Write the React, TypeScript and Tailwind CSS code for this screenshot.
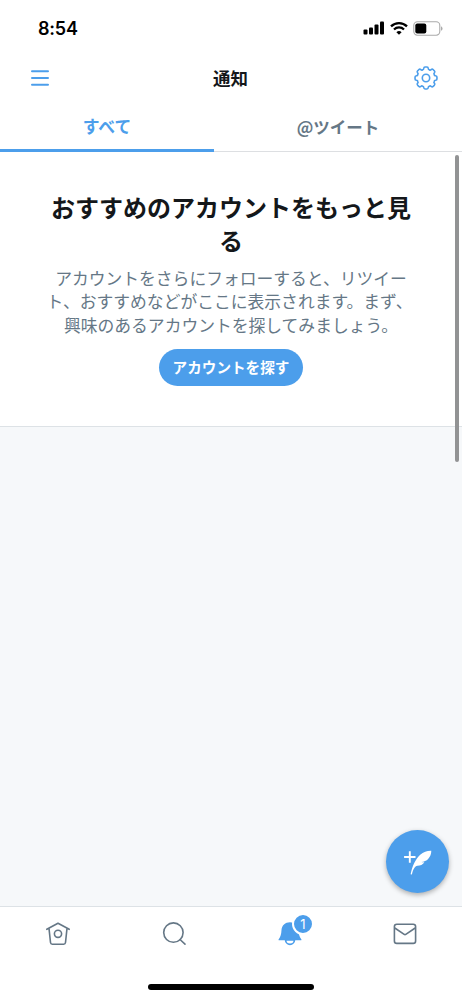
import type { ReactNode } from 'react'

interface TabProps {
  label: string
  active?: boolean
}

// one tooth of the gear, repeated every 45 degrees
function gearPath() {
  const point = (deg: number, r: number) => {
    const a = (deg * Math.PI) / 180
    return `${(12 + r * Math.sin(a)).toFixed(2)} ${(12 - r * Math.cos(a)).toFixed(2)}`
  }
  let d = `M${point(-22.5, 8.9)}`
  for (let t = 0; t < 360; t += 45) {
    d += `Q${point(t - 15.5, 8.6)} ${point(t - 13.5, 9.8)}`
    d += `Q${point(t - 11, 11.2)} ${point(t - 5, 11)}`
    d += `Q${point(t, 10.9)} ${point(t + 5, 11)}`
    d += `Q${point(t + 11, 11.2)} ${point(t + 13.5, 9.8)}`
    d += `Q${point(t + 15.5, 8.6)} ${point(t + 22.5, 8.9)}`
  }
  return d + 'Z'
}

function StatusBar() {
  return (
    <div className="flex h-[52px] items-center justify-between pl-[38px] pr-[19px] pt-1">
      <span className="pt-px font-[Inter] text-[18px] font-semibold leading-none tracking-[-0.2px] text-black">8:54</span>
      <div className="flex items-center gap-[5px]">
        <svg width="22" height="14" viewBox="0 0 22 14">
          <rect x="0.5" y="8.5" width="4" height="5" rx="1" />
          <rect x="6" y="6.5" width="4" height="7" rx="1" />
          <rect x="11.5" y="3.5" width="4" height="10" rx="1" />
          <rect x="17" y="0.5" width="4" height="13" rx="1" />
        </svg>
        <svg width="18" height="14" viewBox="0 0 18 14" fill="none" stroke="black" strokeWidth="2.3">
          <path d="M1 5.3a11.5 11.5 0 0 1 16 0" />
          <path d="M4 8.5a7.1 7.1 0 0 1 10 0" />
          <path d="M6.4 11.2a3.8 3.8 0 0 1 5.2 0L9 13.7z" fill="black" stroke="none" />
        </svg>
        <svg width="30" height="15" viewBox="0 0 30 15" fill="none">
          <rect x="0.8" y="0.8" width="26" height="13.4" rx="3.6" stroke="#aaa" strokeWidth="1.1" />
          <rect x="2.3" y="2.4" width="11" height="10.2" rx="2" fill="black" />
          <path d="M28.2 5.2c1.7.8 1.7 3.8 0 4.6z" fill="#999" />
        </svg>
      </div>
    </div>
  )
}

function Header() {
  return (
    <header className="flex h-[52px] items-center justify-between pl-[31px] pr-6">
      <svg width="18" height="18" viewBox="0 0 18 18" stroke="#4c9eeb" strokeWidth="2" strokeLinecap="round">
        <path d="M1 2.3h16M1 9h16M1 15.7h16" />
      </svg>
      <h1 className="-ml-[2px] text-[17.5px] font-bold leading-none text-[#14171a]">通知</h1>
      <svg width="24" height="24" viewBox="0 0 24 24" fill="none" stroke="#4c9eeb" strokeWidth="1.6">
        <path d={gearPath()} />
        <circle cx="12" cy="12" r="3.7" />
      </svg>
    </header>
  )
}

function Tab({ label, active }: TabProps) {
  return active ? (
    <div className="flex w-[214px] items-center justify-center border-b-[3px] border-[#4c9eeb] text-[16.8px] font-bold text-[#4c9eeb]">
      {label}
    </div>
  ) : (
    <div className="flex flex-1 items-center justify-center border-b border-[#dddfe2] pb-px text-[16.5px] font-bold text-[#657786]">
      {label}
    </div>
  )
}

function NavItem({ children }: { children: ReactNode }) {
  return <div className="flex flex-1 justify-center pt-[14px] text-[#657786]">{children}</div>
}

function BottomNav() {
  return (
    <nav className="flex h-[93px] shrink-0 flex-col border-t border-[#dde2e6] bg-white">
      <div className="-mr-px flex h-[77px]">
        <NavItem>
          <svg width="26" height="26" viewBox="0 0 26 26" fill="none" stroke="currentColor" strokeWidth="1.6" strokeLinecap="round" strokeLinejoin="round">
            <path d="M1.8 8.3 13 2.2l11.2 6.1M4 7.3l1.5 14.2q.2 1.7 1.8 1.7h11.4q1.6 0 1.8-1.7L22 7.3" />
            <circle cx="13" cy="12.8" r="3.6" />
          </svg>
        </NavItem>
        <NavItem>
          <svg width="26" height="26" viewBox="0 0 26 26" fill="none" stroke="currentColor" strokeWidth="1.6" strokeLinecap="round">
            <circle cx="12.4" cy="11.6" r="9.7" />
            <path d="m19 18.5 5 4.6" />
          </svg>
        </NavItem>
        <NavItem>
          <div className="relative ml-px">
            <svg width="26" height="26" viewBox="0 0 26 26">
              <path
                d="M13 1.3c-4.8 0-8.3 3.3-8.5 7.8-.2 4.3-1 7-2.6 8.8-.7.9-.5 1.4.4 1.4h21.400c.9 0 1.100-.5.4-1.400-1.600-1.800-2.400-4.500-2.600-8.800-.2-4.500-3.700-7.800-8.500-7.800z"
                fill="#4c9eeb"
              />
              <path d="M8.6 18.900a4.400 4.400 0 0 0 8.800 0z" fill="white" stroke="#4c9eeb" strokeWidth="1.700" />
            </svg>
            <span className="absolute left-[15px] top-[-8px] flex h-[22px] w-[22px] items-center justify-center rounded-full border-2 border-white bg-[#4c9eeb] font-[Inter] text-[13px] leading-none text-white">
              1
            </span>
          </div>
        </NavItem>
        <NavItem>
          <svg width="26" height="26" viewBox="0 0 26 26" fill="none" stroke="currentColor" strokeWidth="1.6" strokeLinejoin="round">
            <rect x="2.4" y="3.2" width="21.2" height="19.2" rx="2.4" />
            <path d="m2.8 7 9.4 6.3q.8.6 1.6 0L23.2 7" />
          </svg>
        </NavItem>
      </div>
      <div className="mx-auto h-[6px] w-[166px] rounded-full bg-black" />
    </nav>
  )
}

export default function App() {
  return (
    <div className="flex h-[999px] w-[462px] flex-col overflow-hidden bg-white font-['Noto_Sans_CJK_JP',sans-serif]">
      <StatusBar />
      <Header />
      <div className="flex h-[48px]">
        <Tab label="すべて" active />
        <Tab label="@ツイート" />
      </div>

      <main className="relative flex-1 bg-[#f6f8fa]">
        <section className="flex h-[275px] flex-col items-center border-b border-[#dde2e6] bg-white pt-[38px] text-center">
          <h2 className="text-[24px] font-bold leading-[33px] text-[#14171a]">
            おすすめのアカウントをもっと見
            <br />る
          </h2>
          <p className="mt-[11px] text-[16.8px] leading-[23.4px] text-[#657786]">
            アカウントをさらにフォローすると、リツイー
            <br />
            <span className="mr-[3px]">ト、おすすめなどがここに表示されます。まず、</span>
            <br />
            興味のあるアカウントを探してみましょう。
          </p>
          <button className="mt-[12px] h-[37px] w-[144px] rounded-full bg-[#4c9eeb] text-[14.6px] font-bold leading-none text-white">
            アカウントを探す
          </button>
        </section>

        <div className="absolute right-[3px] top-[3px] h-[307px] w-[4px] rounded-full bg-[#929394]" />

        <button className="absolute bottom-[13px] right-[13px] flex h-[63px] w-[63px] items-center justify-center rounded-full bg-[#4c9eeb] shadow-[0_2px_5px_rgba(0,0,0,0.3)]">
          <svg width="32" height="32" viewBox="0 0 32 32" fill="white">
            <path d="M7.8 5.3v11.400M2.100 11h11.400" stroke="white" strokeWidth="1.900" />
            <path d="M29.300 4.800C25.500 4.600 21.500 6 18.200 8.800 13.400 13.200 10.400 20 8.600 28.300l1.300.2c.5-2.600 1.200-4.500 2.300-6.200 1-1.500 1.800-2.400 3.200-2.500 2.900-.1 5.500-1.300 7-3.600-1.200.2-2.200.1-3-.2 2.600-.3 5-1.100 6.900-3.300 1.900-2.100 3-4.600 3-7.900z" />
          </svg>
        </button>
      </main>

      <BottomNav />
    </div>
  )
}
